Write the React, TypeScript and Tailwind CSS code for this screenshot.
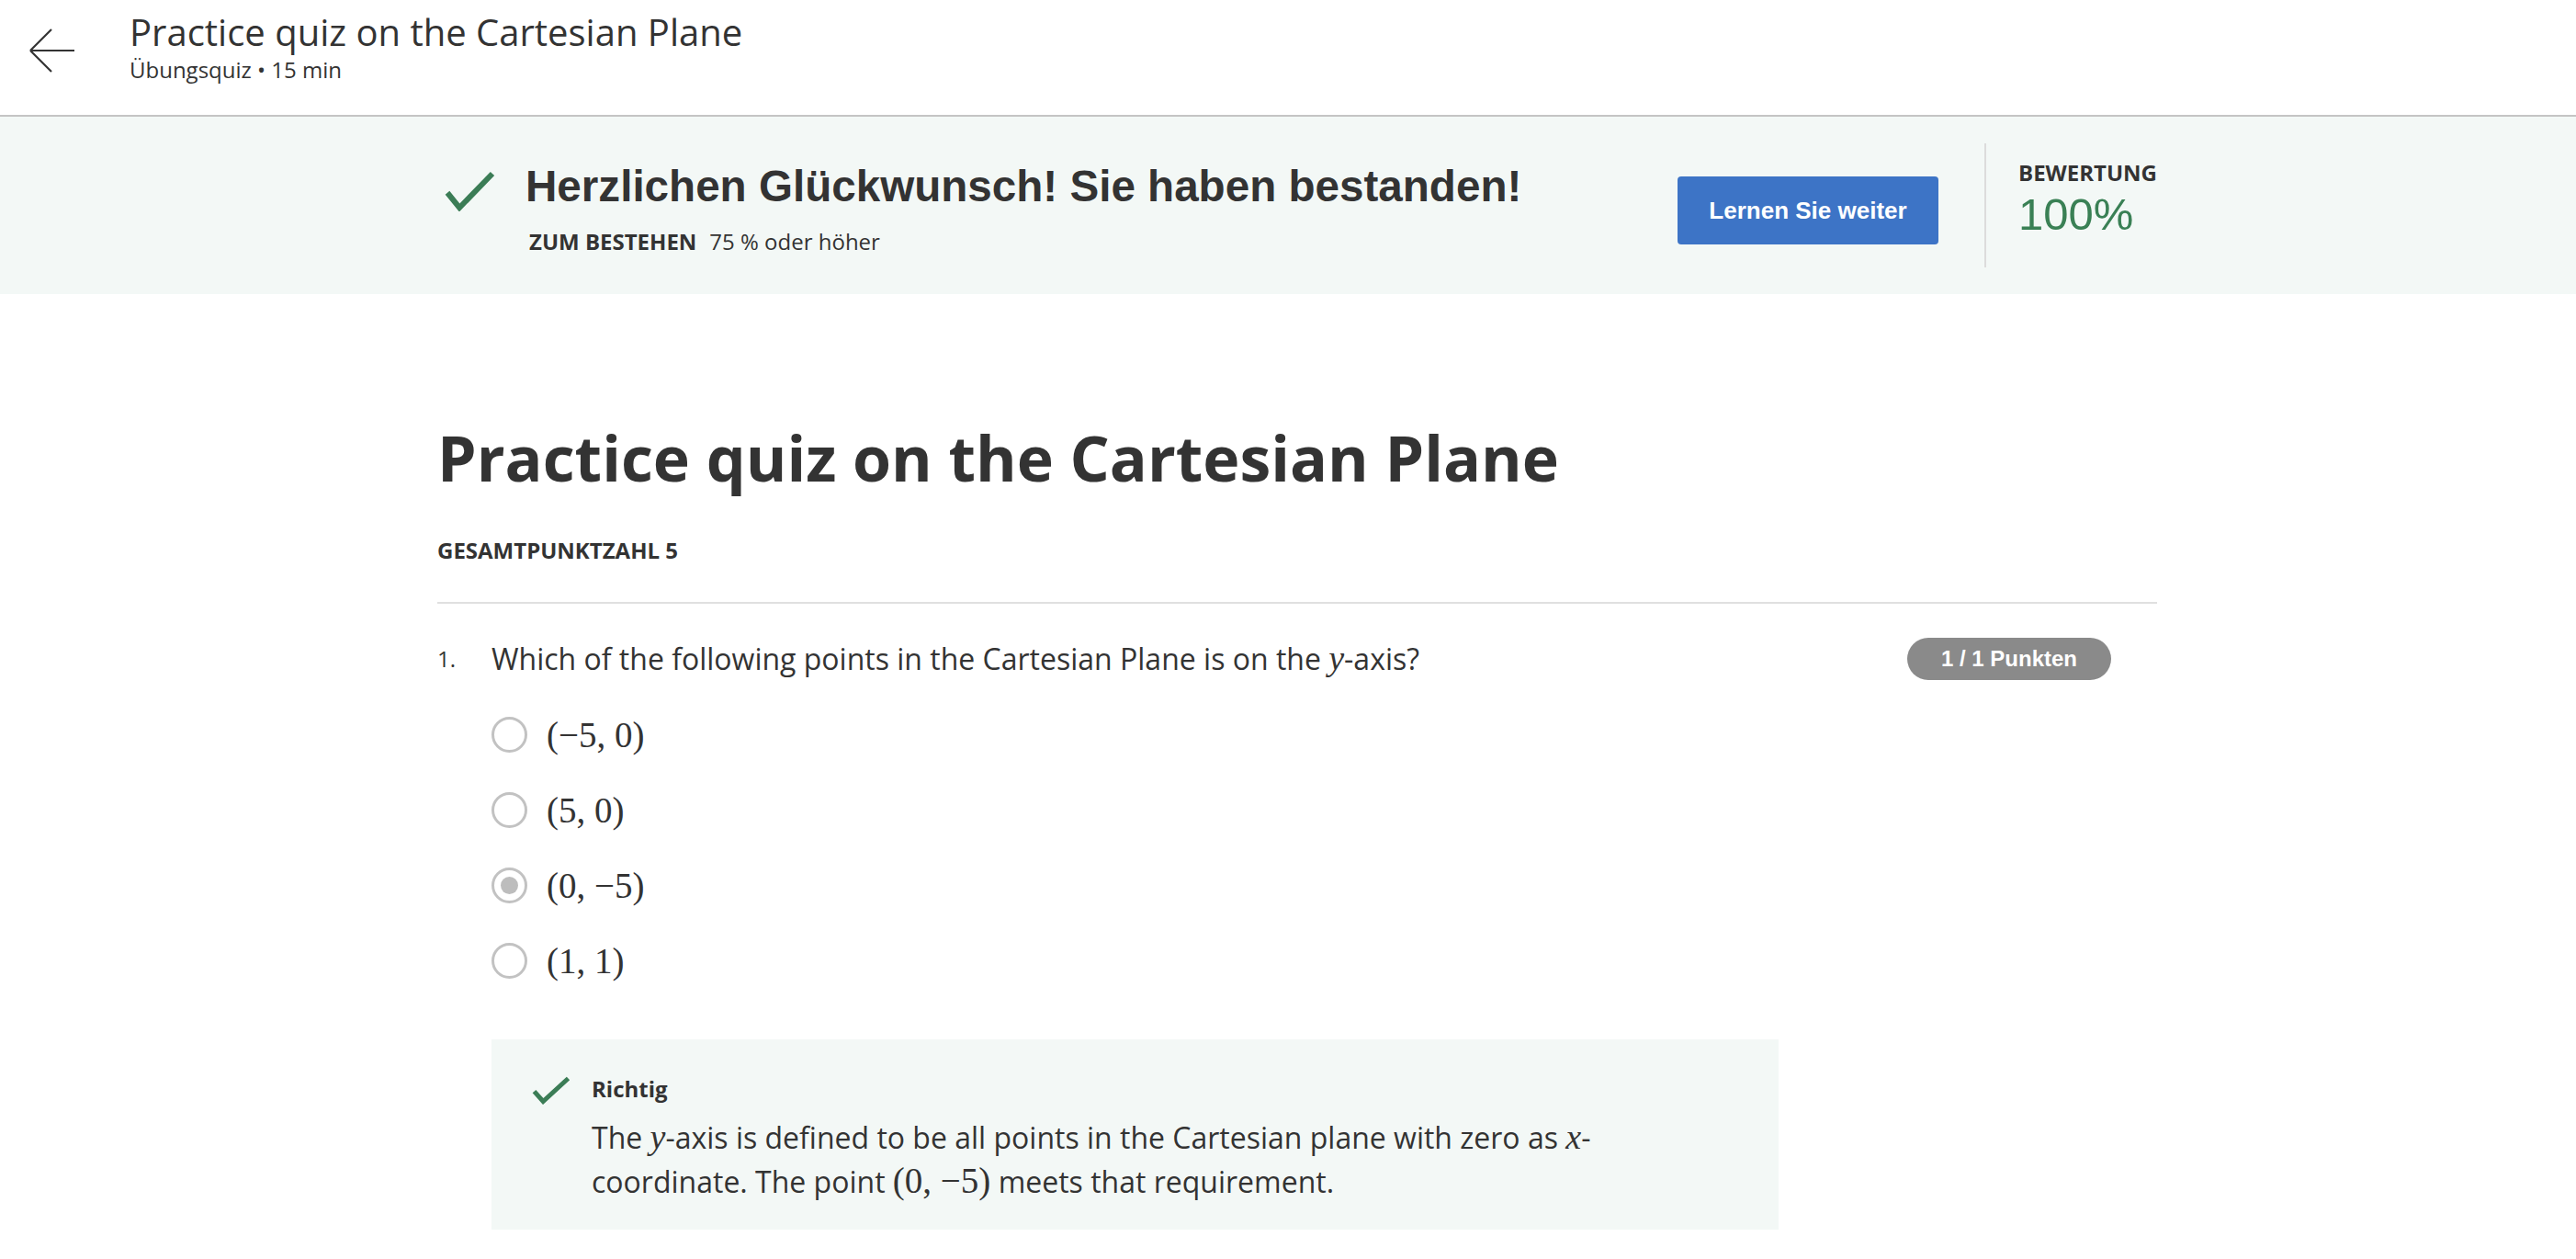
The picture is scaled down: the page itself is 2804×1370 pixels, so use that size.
import React from "react";

const Check = ({ w, h, sw }: { w: number; h: number; sw: number }) => (
  <svg width={w} height={h} viewBox={`0 0 ${w} ${h}`} fill="none">
    <polyline
      points={`${sw / 2 + 1},${h * 0.55} ${w * 0.3},${h - sw / 2 - 1} ${w - sw / 2 - 1},${sw / 2 + 1}`}
      stroke="#3b7d56"
      strokeWidth={sw}
      strokeLinecap="butt"
      strokeLinejoin="miter"
    />
  </svg>
);

const Radio = ({ selected }: { selected?: boolean }) => (
  <div className="w-[39px] h-[39px] rounded-full border-[3px] border-[#c2c2c2] bg-white flex items-center justify-center shrink-0">
    {selected && <div className="w-[19px] h-[19px] rounded-full bg-[#bdbdbd]" />}
  </div>
);

const MathI = ({ children }: { children: React.ReactNode }) => (
  <span className="font-['Liberation_Serif','DejaVu_Serif',serif] italic text-[38px] leading-none">{children}</span>
);

const MathM = ({ children }: { children: React.ReactNode }) => (
  <span className="font-['Liberation_Serif','DejaVu_Serif',serif] text-[39px] leading-none">{children}</span>
);

export default function App() {
  const options = ["(−5, 0)", "(5, 0)", "(0, −5)", "(1, 1)"];
  return (
    <div className="w-[2804px] min-h-[1370px] bg-white text-[#333] font-['Open_Sans',sans-serif]">
      {/* Header */}
      <header className="h-[127px] border-b-2 border-[#c4c4c4] flex items-start">
        <div className="pl-[32px] pt-[31px]">
          <svg width="50" height="50" viewBox="0 0 50 50" fill="none">
            <path d="M1 24 H49 M1 24 L24 1 M1 24 L24 47" stroke="#333" strokeWidth="2.2" />
          </svg>
        </div>
        <div className="ml-[59px] pt-[11px] flex flex-col">
          <div className="text-[40px] leading-[48px]">Practice quiz on the Cartesian Plane</div>
          <div className="text-[24px] leading-[32px] mt-[1px]">Übungsquiz • 15 min</div>
        </div>
      </header>

      {/* Banner */}
      <section className="h-[193px] bg-[#f3f8f6]">
        <div className="ml-[476px] w-[1872px] h-full flex items-center">
          <div className="flex-1 flex items-start mt-[6px]">
            <div className="ml-[7px] mt-[11px]">
              <Check w={57} h={45} sw={6} />
            </div>
            <div className="ml-[32px] flex flex-col">
              <div className="font-['Liberation_Sans',Arial,sans-serif] font-bold text-[47.6px] leading-[58px] text-[#333]">
                Herzlichen Glückwunsch! Sie haben bestanden!
              </div>
              <div className="mt-[15px] ml-[4px] text-[24px] leading-[32px]">
                <span className="font-bold">ZUM BESTEHEN</span>
                <span className="ml-[14px]">75 % oder höher</span>
              </div>
            </div>
          </div>
          <button className="w-[284px] h-[74px] mt-[11px] rounded-[4px] bg-[#3d74c6] text-white font-['Liberation_Sans',Arial,sans-serif] font-bold text-[26px]">
            Lernen Sie weiter
          </button>
          <div className="ml-[50px] w-[2px] h-[135px] bg-[#dcdcdc]" />
          <div className="ml-[35px] w-[151px] flex flex-col self-start mt-[45px]">
            <div className="font-bold text-[24px] leading-[32px]">BEWERTUNG</div>
            <div className="mt-[4px] font-['Liberation_Sans',Arial,sans-serif] text-[49px] leading-[50px] text-[#3a8055]">100%</div>
          </div>
        </div>
      </section>

      {/* Main */}
      <main className="ml-[476px] w-[1872px]">
        <h1 className="mt-[137px] text-[68px] leading-[82px] font-bold">Practice quiz on the Cartesian Plane</h1>
        <div className="mt-[44px] text-[24px] leading-[32px] font-bold">GESAMTPUNKTZAHL 5</div>
        <div className="mt-[40px] h-[2px] bg-[#e0e0e0]" />

        <div className="mt-[37px] flex items-center h-[46px]">
          <div className="w-[59px] text-[24px]">1.</div>
          <div className="flex-1 text-[32px] leading-[44px]">
            Which of the following points in the Cartesian Plane is on the <MathI>y</MathI>-axis?
          </div>
          <div className="mr-[50px] w-[222px] h-[46px] rounded-full bg-[#8a8a8a] text-white font-['Liberation_Sans',Arial,sans-serif] font-bold text-[24px] flex items-center justify-center">
            1 / 1 Punkten
          </div>
        </div>

        <div className="mt-[18px] ml-[59px] flex flex-col">
          {options.map((o, i) => (
            <div key={o} className="h-[82px] flex items-center">
              <Radio selected={i === 2} />
              <div className="ml-[21px]">
                <MathM>{o}</MathM>
              </div>
            </div>
          ))}
        </div>

        <div className="mt-[45px] ml-[59px] w-[1401px] bg-[#f3f8f6] pt-[38px] pb-[28px] flex items-start">
          <div className="ml-[43px] mt-[1px]">
            <Check w={44} h={32} sw={5} />
          </div>
          <div className="ml-[22px] flex flex-col">
            <div className="font-bold text-[24px] leading-[32px]">Richtig</div>
            <div className="mt-[13px] text-[32px] leading-[48px]">
              The <MathI>y</MathI>-axis is defined to be all points in the Cartesian plane with zero as <MathI>x</MathI>-
              <br />
              coordinate. The point <MathM>(0, −5)</MathM> meets that requirement.
            </div>
          </div>
        </div>
      </main>
    </div>
  );
}
